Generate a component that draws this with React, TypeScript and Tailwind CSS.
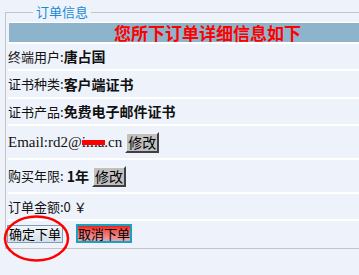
import React from 'react';

const cjk = { fontFamily: '"Noto Sans CJK SC", "Liberation Sans", sans-serif' };
const serif = { fontFamily: '"Liberation Serif", "Noto Sans CJK SC", serif' };

const EditButton: React.FC = () => (
    <button
        className="ml-[3px] h-[21px] px-[1px] whitespace-nowrap bg-[#c0c0c0] text-[14px] leading-[16px] text-black border-2 border-t-[#f4f4f4] border-l-[#f4f4f4] border-r-[#404040] border-b-[#404040]"
        style={cjk}
    >
        修改
    </button>
);

const App: React.FC = () => {
    return (
        <div className="relative w-[359px] h-[275px] overflow-hidden bg-[#eef3fb] text-[13px] text-[#111]" style={cjk}>
            <fieldset className="ml-[5px] mt-[5px] w-[404px] border border-[#c4c4c4] px-[2px] pb-[5px]">
                <legend className="ml-[25px] px-[3px] text-[13px] leading-[14px] text-[#1a8ad4]">订单信息</legend>

                <div className="mt-[3px] border-t border-white">
                    <div className="ml-[1px] h-[19px] bg-[#8db4cb] flex items-center justify-center text-[17px] leading-[19px] font-bold text-[#ff0000]">
                        您所下订单详细信息如下
                    </div>
                    <div className="h-[2px] bg-white" />
                </div>

                <div className="h-[27px] flex items-center border-b-2 border-white">
                    <span>终端用户:</span>
                    <span className="font-bold text-[14px]">唐占国</span>
                </div>
                <div className="h-[28px] flex items-center border-b-2 border-white">
                    <span>证书种类:</span>
                    <span className="font-bold text-[14px]">客户端证书</span>
                </div>
                <div className="h-[27px] flex items-center border-b-2 border-white">
                    <span>证书产品:</span>
                    <span className="font-bold text-[14px]">免费电子邮件证书</span>
                </div>
                <div className="h-[34px] flex items-center border-b-2 border-white">
                    <span style={serif} className="text-[15px] whitespace-nowrap">
                        Email:rd2@
                        <span className="relative">
                            ima
                            <span className="absolute left-0 right-[-1px] top-[6px] h-[5px] bg-[#ff0000]" />
                        </span>
                        .cn
                    </span>
                    <EditButton />
                </div>
                <div className="h-[34px] flex items-center border-b-2 border-white">
                    <span>购买年限:</span>
                    <span className="ml-[3px] font-bold text-[14px]">1年</span>
                    <EditButton />
                </div>
                <div className="h-[27px] flex items-center border-b-2 border-white">
                    <span>订单金额:0 ￥</span>
                </div>

                <div className="mt-[3px] flex items-end gap-[13px]">
                    <button className="-ml-[1px] h-[18px] px-[1px] whitespace-nowrap border border-[#7f9db9] bg-gradient-to-b from-[#f2f6fa] to-[#d6e0ea] text-[13px] leading-[16px] text-black">
                        确定下单
                    </button>
                    <button className="h-[19px] px-0 whitespace-nowrap border-2 border-[#1aa0c0] bg-gradient-to-b from-[#f01818] to-[#e4a4ae] text-[13px] leading-[15px] text-black">
                        取消下单
                    </button>
                </div>
            </fieldset>

            <svg className="absolute left-0 top-0 pointer-events-none" width="359" height="275">
                <ellipse cx="36.5" cy="238.5" rx="31.5" ry="22" fill="none" stroke="#ff0000" strokeWidth="2.5" />
            </svg>
        </div>
    );
};

export default App;
